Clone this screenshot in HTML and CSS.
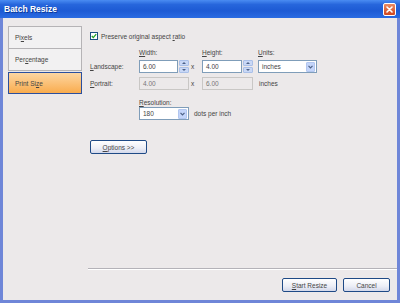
FILE: index.html
```html
<!DOCTYPE html>
<html lang="en">
<head>
  <meta charset="UTF-8">
  <title>Batch Resize</title>
  <link rel="stylesheet" href="styles.css">
</head>
<body>
  <div class="window">
    <div class="titlebar">
      <span class="title">Batch Resize</span>
      <span class="close">
        <svg width="7" height="7" viewBox="0 0 7 7"><path d="M1 1L6 6M6 1L1 6" stroke="#fff" stroke-width="1.6" stroke-linecap="round"/></svg>
      </span>
    </div>
    <div class="client">
      <div class="tabs">
        <div class="tab">Pi<u>x</u>els</div>
        <div class="tab">Per<u>c</u>entage</div>
        <div class="tab selected">Print Si<u>z</u>e</div>
      </div>
      <div class="main">
        <div class="panel">
          <label class="check-row">
            <span class="checkbox">
              <svg width="6" height="6" viewBox="0 0 6 6"><path d="M0.8 3L2.3 4.6L5.2 1.2" stroke="#21a121" stroke-width="1.3" fill="none"/></svg>
            </span>
            <span>Preserve original aspect <u>r</u>atio</span>
          </label>

          <div class="size-grid">
            <span></span>
            <span class="head"><u>W</u>idth:</span>
            <span></span>
            <span class="head"><u>H</u>eight:</span>
            <span></span>
            <span class="head"><u>U</u>nits:</span>

            <span class="row-label"><u>L</u>andscape:</span>
            <div class="spin-field">
              <span class="input">6.00</span>
              <span class="spin"><i class="up"></i><i class="down"></i></span>
            </div>
            <span class="times">x</span>
            <div class="spin-field">
              <span class="input">4.00</span>
              <span class="spin"><i class="up"></i><i class="down"></i></span>
            </div>
            <span></span>
            <div class="select units">
              <span class="value">inches</span>
              <span class="drop"><svg width="5" height="4" viewBox="0 0 5 4"><path d="M0.5 0.8L2.5 2.8L4.5 0.8" stroke="#4d6185" stroke-width="1.2" fill="none"/></svg></span>
            </div>

            <span class="row-label"><u>P</u>ortrait:</span>
            <span class="input disabled">4.00</span>
            <span class="times">x</span>
            <span class="input disabled">6.00</span>
            <span></span>
            <span class="unit-text">inches</span>
          </div>

          <div class="resolution">
            <span class="res-label"><u>R</u>esolution:</span>
            <div class="res-row">
              <div class="select res">
                <span class="value">180</span>
                <span class="drop"><svg width="5" height="4" viewBox="0 0 5 4"><path d="M0.5 0.8L2.5 2.8L4.5 0.8" stroke="#4d6185" stroke-width="1.2" fill="none"/></svg></span>
              </div>
              <span class="unit-text">dots per inch</span>
            </div>
          </div>

          <button class="btn options"><u>O</u>ptions &gt;&gt;</button>
        </div>
        <div class="separator"></div>
        <div class="buttons">
          <button class="btn start"><u>S</u>tart Resize</button>
          <button class="btn cancel">Cancel</button>
        </div>
      </div>
    </div>
  </div>
</body>
</html>
```

FILE: styles.css
```css
body {
  margin: 0;
  font-family: "Liberation Sans", Arial, sans-serif;
  font-size: 6.5px;
  color: #444;
}
u {
  text-decoration-thickness: 0.5px;
  text-underline-offset: 1px;
}
.window {
  width: 400px;
  height: 303px;
  box-sizing: border-box;
  display: flex;
  flex-direction: column;
  background: #ece9ea;
  border: 3px solid #6f86d8;
  border-top: none;
}
.titlebar {
  height: 18px;
  margin: 0 -3px;
  display: flex;
  align-items: center;
  justify-content: space-between;
  padding: 0 4px 0 4px;
  background: linear-gradient(#4a8cf2 0%, #2766dc 25%, #1d5ad4 60%, #2a6be2 100%);
}
.title {
  color: #fff;
  font-weight: bold;
  font-size: 8.5px;
  text-shadow: 1px 1px 0 #0c3a9a;
}
.close {
  width: 13px;
  height: 13px;
  box-sizing: border-box;
  border: 1px solid #fff;
  border-radius: 2px;
  background: linear-gradient(#ea8b63, #d0461f);
  display: flex;
  align-items: center;
  justify-content: center;
  margin-top: 1px;
}
.client {
  flex: 1;
  display: flex;
  padding: 8px 0 0 5px;
}
.tabs {
  width: 74px;
  display: flex;
  flex-direction: column;
}
.tab {
  height: 21px;
  border: 1px solid #b5b3b6;
  background: #f2f1f2;
  display: flex;
  align-items: center;
  padding-left: 6px;
  margin-top: -1px;
}
.tab:first-child {
  margin-top: 0;
}
.tab.selected {
  margin-top: 1px;
  height: 20px;
  border-color: #2b4f9e;
  background: linear-gradient(#fdd6a2, #f9ac4e);
}
.main {
  flex: 1;
  display: flex;
  flex-direction: column;
  margin-left: 6px;
}
.panel {
  flex: 1;
  padding: 6px 0 0 2px;
}
.check-row {
  display: flex;
  align-items: center;
  gap: 3px;
  height: 8px;
}
.checkbox {
  width: 8px;
  height: 8px;
  box-sizing: border-box;
  border: 1px solid #1c5180;
  background: #fff;
  display: flex;
  align-items: center;
  justify-content: center;
}
.size-grid {
  display: grid;
  grid-template-columns: 49px 50px 13px 51px 5px 59px;
  grid-template-rows: 9px 13px 13px;
  row-gap: 4px;
  margin-top: 7px;
  align-items: center;
}
.head {
  align-self: end;
}
.times {
  padding-left: 2px;
}
.input {
  height: 13px;
  box-sizing: border-box;
  border: 1px solid #7f9db9;
  background: #fff;
  display: flex;
  align-items: center;
  padding-left: 3px;
  flex: 1;
}
.input.disabled {
  background: #ece9ea;
  border-color: #c9c7c5;
  color: #777;
}
.spin-field {
  display: flex;
  height: 13px;
}
.spin {
  width: 10px;
  display: flex;
  flex-direction: column;
  gap: 1px;
  padding-left: 1px;
}
.spin i {
  flex: 1;
  background: #c9d8f6;
  border: 1px solid #aac0e8;
  border-radius: 1px;
  position: relative;
}
.spin i::after {
  content: "";
  position: absolute;
  left: 2px;
  border-left: 2px solid transparent;
  border-right: 2px solid transparent;
}
.spin .up::after {
  top: 1px;
  border-bottom: 2px solid #4d6185;
}
.spin .down::after {
  top: 1px;
  border-top: 2px solid #4d6185;
}
.select {
  height: 13px;
  box-sizing: border-box;
  border: 1px solid #7f9db9;
  background: #fff;
  display: flex;
  align-items: center;
  justify-content: space-between;
  padding: 0 1px 0 3px;
}
.drop {
  width: 9px;
  height: 10px;
  background: #c4d5fa;
  border: 1px solid #b2c6ef;
  border-radius: 1px;
  box-sizing: border-box;
  display: flex;
  align-items: center;
  justify-content: center;
}
.unit-text {
  padding-left: 1px;
}
.resolution {
  margin: 7px 0 0 49px;
  display: flex;
  flex-direction: column;
  align-items: flex-start;
  gap: 1px;
}
.res-label {
  height: 9px;
  display: flex;
  align-items: flex-end;
}
.res-row {
  display: flex;
  align-items: center;
  gap: 4px;
}
.select.res {
  width: 50px;
}
.btn {
  font: inherit;
  color: #444;
  height: 14px;
  box-sizing: border-box;
  border: 1px solid #1f4a86;
  border-radius: 2px;
  background: linear-gradient(#ffffff, #eceef6 60%, #d3d8ea);
  padding: 0;
  display: flex;
  align-items: center;
  justify-content: center;
}
.options {
  width: 57px;
  margin-top: 20px;
}
.separator {
  height: 1px;
  background: #b4b2b8;
  border-bottom: 1px solid #fff;
}
.buttons {
  display: flex;
  justify-content: flex-end;
  gap: 6px;
  padding: 8px 7px 8px 0;
}
.start {
  width: 55px;
}
.cancel {
  width: 47px;
}
```
